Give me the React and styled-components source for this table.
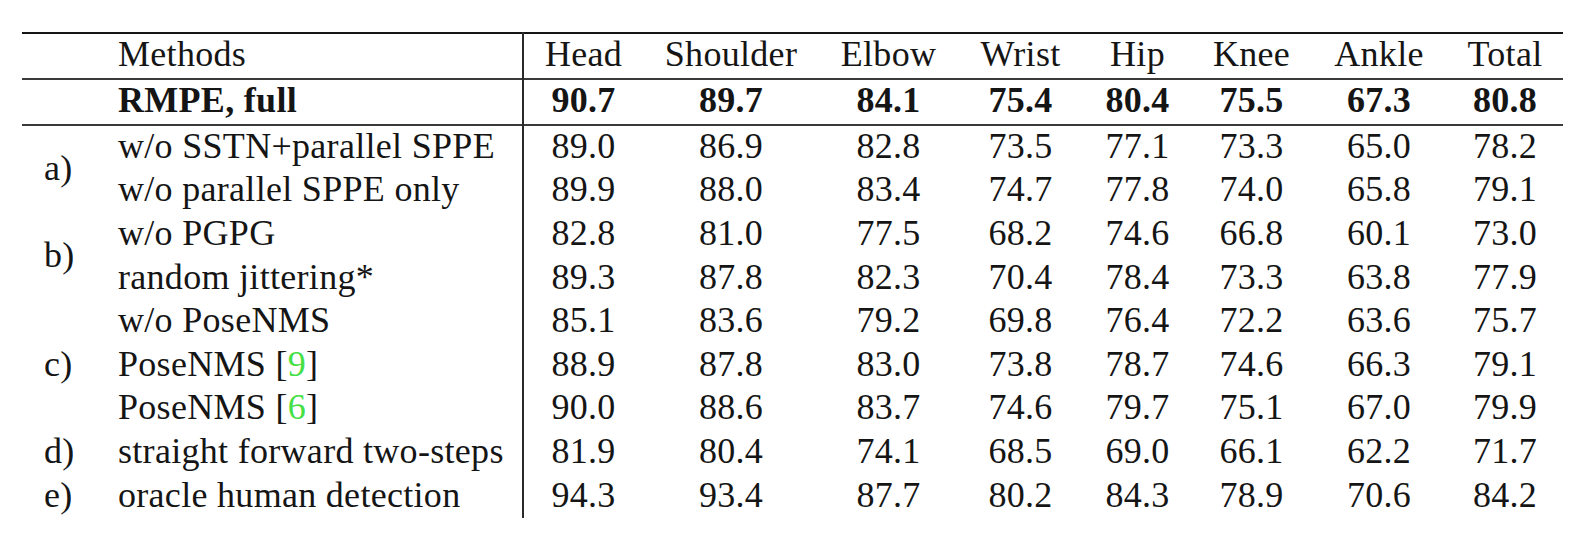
import React from 'react'
import styled, { createGlobalStyle } from 'styled-components'

const GlobalStyle = createGlobalStyle`
  body {
    margin: 0;
    background: #ffffff;
    font-family: "Liberation Serif", "Times New Roman", serif;
    color: #151515;
  }
`

const Table = styled.table`
  width: 1541px;
  margin: 32px 0 0 22px;
  table-layout: fixed;
  border-collapse: collapse;
  font-size: 36px;
  letter-spacing: 0.3px;
`

const Row = styled.tr`
  border-top: ${(p) => (p.$rule ? p.$rule : 'none')};
`

const Cell = styled.td`
  height: ${(p) => (p.$tight ? '39.6px' : '40px')};
  padding: 0 0 4px 0;
  line-height: 1;
  vertical-align: middle;
  text-align: center;
  white-space: nowrap;
  font-weight: ${(p) => (p.$bold ? 700 : 400)};
`

const LabelCell = styled(Cell)`
  text-align: left;
  padding-left: 22px;
`

const MethodCell = styled(Cell)`
  text-align: left;
  padding-left: 22px;
  border-right: 2px solid #2a2a2a;
`

const Cite = styled.span`
  color: #45e045;
`

const widths = [74, 427, 120, 176, 139, 125, 109, 119, 136, 116]
const parts = ['Head', 'Shoulder', 'Elbow', 'Wrist', 'Hip', 'Knee', 'Ankle', 'Total']

const full = ['90.7', '89.7', '84.1', '75.4', '80.4', '75.5', '67.3', '80.8']

const groups = [
  {
    label: 'a)',
    rows: [
      { name: 'w/o SSTN+parallel SPPE', values: ['89.0', '86.9', '82.8', '73.5', '77.1', '73.3', '65.0', '78.2'] },
      { name: 'w/o parallel SPPE only', values: ['89.9', '88.0', '83.4', '74.7', '77.8', '74.0', '65.8', '79.1'] },
    ],
  },
  {
    label: 'b)',
    rows: [
      { name: 'w/o PGPG', values: ['82.8', '81.0', '77.5', '68.2', '74.6', '66.8', '60.1', '73.0'] },
      { name: 'random jittering*', values: ['89.3', '87.8', '82.3', '70.4', '78.4', '73.3', '63.8', '77.9'] },
    ],
  },
  {
    label: 'c)',
    rows: [
      { name: 'w/o PoseNMS', values: ['85.1', '83.6', '79.2', '69.8', '76.4', '72.2', '63.6', '75.7'] },
      { name: 'PoseNMS', cite: '9', values: ['88.9', '87.8', '83.0', '73.8', '78.7', '74.6', '66.3', '79.1'] },
      { name: 'PoseNMS', cite: '6', values: ['90.0', '88.6', '83.7', '74.6', '79.7', '75.1', '67.0', '79.9'] },
    ],
  },
  {
    label: 'd)',
    rows: [
      { name: 'straight forward two-steps', values: ['81.9', '80.4', '74.1', '68.5', '69.0', '66.1', '62.2', '71.7'] },
    ],
  },
  {
    label: 'e)',
    rows: [
      { name: 'oracle human detection', values: ['94.3', '93.4', '87.7', '80.2', '84.3', '78.9', '70.6', '84.2'] },
    ],
  },
]

const App = () => {
  return (
    <>
      <GlobalStyle />
      <Table>
        <colgroup>
          {widths.map((w, i) => (
            <col key={i} style={{ width: w }} />
          ))}
        </colgroup>
        <tbody>
          <Row $rule="2px solid #151515">
            <LabelCell />
            <MethodCell>Methods</MethodCell>
            {parts.map((p) => (
              <Cell key={p}>{p}</Cell>
            ))}
          </Row>
          <Row $rule="2px solid #3a3a3a">
            <LabelCell />
            <MethodCell $bold>RMPE, full</MethodCell>
            {full.map((v, i) => (
              <Cell key={i} $bold>{v}</Cell>
            ))}
          </Row>
          {groups.map((g) =>
            g.rows.map((r, i) => (
              <Row key={g.label + i} $rule={g.label === 'a)' && i === 0 ? '2px solid #3a3a3a' : null}>
                {i === 0 && (
                  <LabelCell $tight rowSpan={g.rows.length}>
                    {g.label}
                  </LabelCell>
                )}
                <MethodCell $tight>
                  {r.name}
                  {r.cite && (
                    <>
                      {' ['}
                      <Cite>{r.cite}</Cite>
                      {']'}
                    </>
                  )}
                </MethodCell>
                {r.values.map((v, j) => (
                  <Cell key={j} $tight>
                    {v}
                  </Cell>
                ))}
              </Row>
            ))
          )}
        </tbody>
      </Table>
    </>
  )
}

export default App
